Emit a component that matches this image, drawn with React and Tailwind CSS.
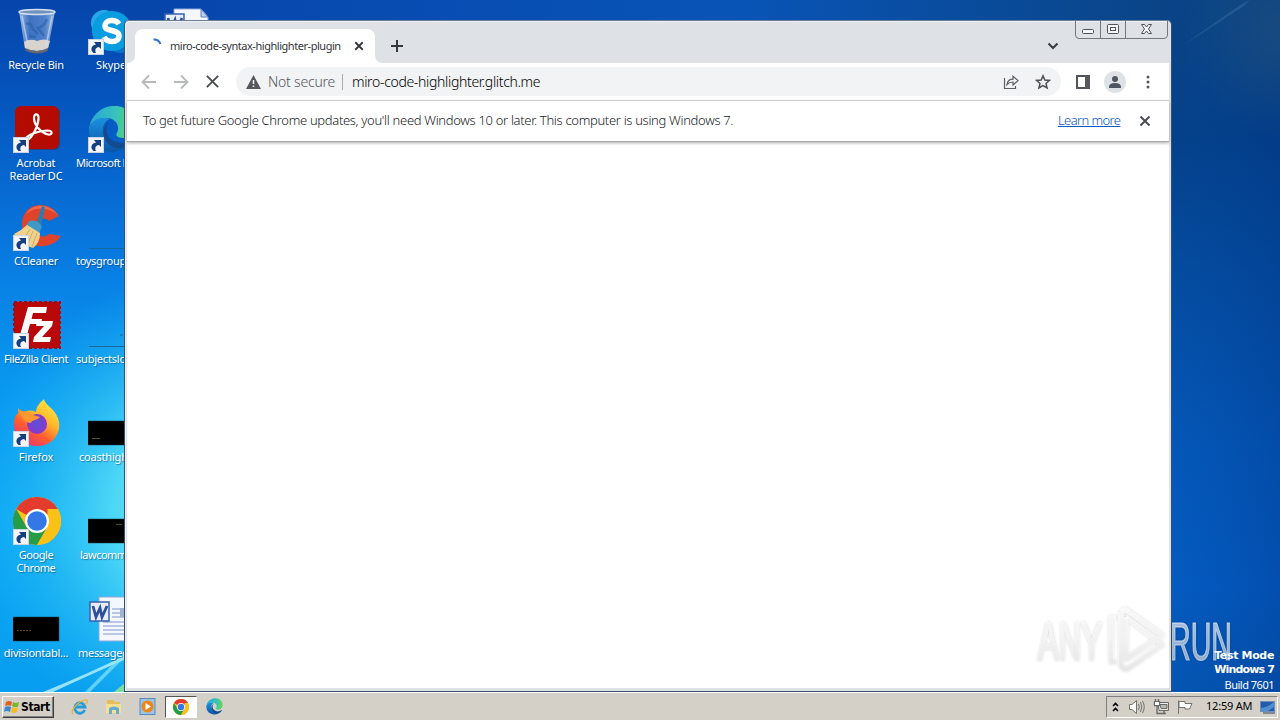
import React from "react";

const UI = "font-['Noto_Sans','Open_Sans',sans-serif]";

function Shortcut() {
  return (
    <svg className="absolute left-0 bottom-0" width="16" height="16" viewBox="0 0 16 16">
      <rect x=".5" y=".5" width="15" height="15" fill="#f2f4f8" stroke="#c9d3e2" />
      <path d="M5.500 14C2 11 3 6.500 8 5.500L6 3H13V10L11 8C7.500 8.500 6.500 11 8 14Z" fill="#153f80" />
    </svg>
  );
}

function RecycleBin() {
  return (
    <svg width="48" height="48" viewBox="0 0 48 48">
      <defs>
        <linearGradient id="bin" x1="0" x2="1">
          <stop offset="0" stopColor="#bfd3ec" stopOpacity=".85" />
          <stop offset=".3" stopColor="#5b88cb" stopOpacity=".65" />
          <stop offset=".7" stopColor="#7da3da" stopOpacity=".6" />
          <stop offset="1" stopColor="#b9cfea" stopOpacity=".85" />
        </linearGradient>
      </defs>
      <path d="M6 4L12 42Q24 49 35 42L42 4Z" fill="url(#bin)" />
      <path d="M11 35Q17 31 24 34Q31 31 37 34L35 41Q24 47 12 41Z" fill="#d9d3cd" />
      <path d="M12 41Q24 47 35 41L34.500 44Q24 49 13 44Z" fill="#65686c" />
      <path d="M13 17Q18 15 20 22L25 27M34 12Q31 20 25 21L31 29M16 29L23 30" stroke="#2f62ad" strokeWidth="2.500" fill="none" opacity=".7" />
      <ellipse cx="24" cy="5" rx="18" ry="2.500" fill="#6f91bd" stroke="#d3dfec" strokeWidth="1.500" />
      <path d="M9 9L15 39M39 9L33 39" stroke="#d3e2f4" strokeWidth="1.500" opacity=".6" />
    </svg>
  );
}

function Skype() {
  return (
    <svg width="48" height="48" viewBox="0 0 48 48">
      <circle cx="16" cy="16" r="13" fill="#28a8ea" />
      <circle cx="32" cy="33" r="13" fill="#0a74c9" />
      <circle cx="24" cy="24" r="20" fill="#0a9ce0" />
      <path d="M31 17C28 12 17 12 17 19C17 25 31 22 31 29C31 36 19 36 16 30" fill="none" stroke="#fff" strokeWidth="5.500" />
    </svg>
  );
}

function WordDoc() {
  return (
    <svg width="48" height="48" viewBox="0 0 48 48">
      <path d="M11 2H38L45 10V46H11Z" fill="#f4f7fe" stroke="#91a7d8" />
      <path d="M38 2V10H45Z" fill="#bccdf2" stroke="#6680bd" />
      <path d="M24 14H42M24 18H42M24 22H42M15 27H42M15 31H42M15 35H42M15 39H42" stroke="#7f95cc" />
      <rect x="32" y="13" width="10" height="9" fill="#a3b1d2" />
      <rect x="2" y="7" width="19" height="19" fill="#e7edfb" stroke="#3b5fae" strokeWidth="1.500" />
      <path d="M5 11L8 22L12 13L14 22L19 11" fill="none" stroke="#2c4f9e" strokeWidth="2.800" />
    </svg>
  );
}

function Acrobat() {
  return (
    <svg width="48" height="48" viewBox="0 0 48 48">
      <rect x="3" y="2" width="44" height="43" rx="6" fill="#49262b" opacity=".5" />
      <rect x="2" y="1" width="44" height="43" rx="6" fill="#b30b00" />
      <path d="M12 34C15 30 23 26 34 25.500C40 25.500 40 30 35 29.500C28 28 21 20 21 13C21 8 26 8 25.500 14C25 22 19 33 14 35.500C11 36.500 10 35.500 12 34Z" fill="none" stroke="#fff" strokeWidth="2.200" />
    </svg>
  );
}

function Edge() {
  return (
    <svg width="100%" height="100%" viewBox="0 0 48 48">
      <defs>
        <linearGradient id="edgeTop" x1="0" x2="1" y1=".2" y2=".3">
          <stop offset="0" stopColor="#2aa5d9" />
          <stop offset=".6" stopColor="#36c3bb" />
          <stop offset="1" stopColor="#65d456" />
        </linearGradient>
        <linearGradient id="edgeLow" x1="0" x2="0" y1="0" y2="1">
          <stop offset="0" stopColor="#1d91dd" />
          <stop offset="1" stopColor="#0b55a8" />
        </linearGradient>
      </defs>
      <path d="M1 22C5 6 18 0 27 1C40 1 47 11 47 20C47 29 40 33 35 33C29 33 27 30 29 28C33 20 26 13 19 13C10 13 3 18 1 22Z" fill="url(#edgeTop)" />
      <path d="M1 22C5 14 14 11 22 14C14 17 13 27 18 35C24 43 35 43 43 37C35 48 22 49 13 44C4 40 0 31 1 22Z" fill="url(#edgeLow)" />
      <path d="M22 17C17 21 17 29 23 34C30 40 39 38 44 34C45 34 45 35 44 37C38 45 24 46 18 36C13 29 15 20 22 17Z" fill="#134b91" />
    </svg>
  );
}

function CCleaner() {
  return (
    <svg width="48" height="48" viewBox="0 0 48 48">
      <path d="M46 13C40 2 26 -1 17 5C6 12 7 32 15 38C25 47 41 44 48 33L36 31C31 36 23 33 22 25C22 16 31 13 36 18Z" fill="#df432c" />
      <path d="M45 12C35 0 20 0 13 11C23 3 35 4 45 12Z" fill="#f3684c" />
      <path d="M29 3L32 4L28 24L23 22Z" fill="#287fae" />
      <path d="M16 18Q25 16 29 24L26 30L13 23Z" fill="#4098c8" />
      <path d="M14 22L27 30Q27 40 20 45Q10 43 1 31Q9 27 14 22Z" fill="#f0d28c" />
      <path d="M17 26L10 37M20 28L15 41M24 30L19 44" stroke="#d0aa68" />
    </svg>
  );
}

function FileZilla() {
  return (
    <svg width="48" height="48" viewBox="0 0 48 48">
      <rect x="1" y="1" width="46" height="46" fill="#b90809" stroke="#a30c12" strokeWidth="2" strokeDasharray="3 2" />
      <path d="M15 6H34L33 12H20L18.500 18H29L28 23H17L14 34H7Z" fill="#fff" />
      <path d="M24 20H40L39 25L29 36H38L37 41H20L21 36L31 25H23Z" fill="#fff" />
    </svg>
  );
}

function Firefox() {
  return (
    <svg width="48" height="48" viewBox="0 0 48 48">
      <defs>
        <linearGradient id="fox" x1=".85" x2=".2" y1="0" y2="1">
          <stop offset="0" stopColor="#fff044" />
          <stop offset=".4" stopColor="#ffb52c" />
          <stop offset=".65" stopColor="#ff602f" />
          <stop offset="1" stopColor="#e62c77" />
        </linearGradient>
        <radialGradient id="globe">
          <stop offset="0" stopColor="#5754d8" />
          <stop offset="1" stopColor="#8c35cb" />
        </radialGradient>
      </defs>
      <path d="M5 9C7 12 10 13 14 12C18 11 21 12 23 13C23 7 28 3 31 0C32 7 44 10 46 23C48 35 39 47 25 47C11 47 2 39 1 28C0 22 2 17 5 14Z" fill="url(#fox)" />
      <circle cx="24" cy="25" r="10" fill="url(#globe)" />
      <path d="M5 10C9 14 16 12 20 16L27 18C24 22 19 20 18 24C13 24 9 20 5 10Z" fill="#ff982e" />
    </svg>
  );
}

function Chrome() {
  return (
    <svg width="100%" height="100%" viewBox="0 0 48 48">
      <circle cx="24" cy="24" r="24" fill="#fbc116" />
      <path d="M24 24L3.200 12A24 24 0 0 1 44.800 12Z" fill="#e33b2e" />
      <path d="M3.200 12L13.600 30L34.400 30L24 48A24 24 0 0 1 3.200 12Z" fill="#269b48" />
      <path d="M44.800 12A24 24 0 0 1 24 48L34.500 30V12Z" fill="#fbc116" />
      <circle cx="24" cy="24" r="12" fill="#fff" />
      <circle cx="24" cy="24" r="9.800" fill="#3478e8" />
    </svg>
  );
}

function Thumb({ kind }) {
  if (kind === "line" || kind === "dot")
    return (
      <svg width="48" height="48">
        <path d="M1 45.500H47" stroke="#146a9c" />
        {kind === "dot" && <path d="M32 34H35" stroke="#146a9c" />}
      </svg>
    );
  return (
    <svg width="48" height="48">
      <rect y="22" width="46" height="24" fill="#000" stroke="#233e45" strokeWidth=".5" />
      {kind === "left" && <path d="M4 39.500H12" stroke="#756523" strokeOpacity=".8" />}
      {kind === "right" && <path d="M28 27.500H34" stroke="#62622b" strokeOpacity=".8" />}
      {kind === "mid" && <path d="M4 35.500H19" stroke="#67461c" strokeDasharray="2 1" />}
    </svg>
  );
}

const columns = [
  [
    ["Recycle Bin", <RecycleBin />, false, "tracking-[-0.2px]"],
    ["Acrobat\nReader DC", <Acrobat />, true, "tracking-[-0.2px]"],
    ["CCleaner", <CCleaner />, true, "tracking-[-0.3px]"],
    ["FileZilla Client", <FileZilla />, true, "tracking-[-0.45px]"],
    ["Firefox", <Firefox />, true, "tracking-[-0.1px]"],
    ["Google\nChrome", <Chrome />, true, "tracking-[-0.4px]"],
    ["divisiontabl...", <Thumb kind="mid" />, false, "tracking-[-0.25px]"],
  ],
  [
    ["Skype", <Skype />, true, "self-start pl-[21px] tracking-[-0.1px]"],
    ["Microsoft Edge", <Edge />, true, "self-start pl-px tracking-[-0.5px]"],
    ["toysgroup.j...", <Thumb kind="line" />, false, "self-start pl-px tracking-[-0.3px]"],
    ["subjectslo...", <Thumb kind="dot" />, false, "self-start pl-px tracking-[-0.2px]"],
    ["coasthigh...", <Thumb kind="left" />, false, "self-start pl-1 tracking-[-0.2px]"],
    ["lawcomm...", <Thumb kind="right" />, false, "self-start pl-[5px] tracking-[-0.5px]"],
    ["messagec...", <WordDoc />, false, "self-start pl-[3px] tracking-[-0.3px]"],
  ],
  [["", <WordDoc />, false, ""]],
];

function Wallpaper() {
  return (
    <svg className="absolute inset-0" width="1280" height="692" viewBox="0 0 1280 692" preserveAspectRatio="none">
      <defs>
        <linearGradient id="leftSky" x1="0" x2="0" y1="0" y2="1">
          <stop offset="0" stopColor="#0645aa" />
          <stop offset=".14" stopColor="#0554bd" />
          <stop offset=".27" stopColor="#0769d2" />
          <stop offset=".42" stopColor="#0883e6" />
          <stop offset=".56" stopColor="#0998f0" />
          <stop offset=".75" stopColor="#0ca8f5" />
          <stop offset="1" stopColor="#079df0" />
        </linearGradient>
        <radialGradient id="glow" gradientUnits="userSpaceOnUse" cx="210" cy="510" r="240">
          <stop offset="0" stopColor="#76eef2" />
          <stop offset=".4" stopColor="#50daf6" stopOpacity=".95" />
          <stop offset="1" stopColor="#1db7f3" stopOpacity="0" />
        </radialGradient>
        <linearGradient id="rightSky" x1="0" x2="0" y1="0" y2="1">
          <stop offset="0" stopColor="#0a4486" />
          <stop offset=".2" stopColor="#04418b" />
          <stop offset=".4" stopColor="#044ca0" />
          <stop offset=".65" stopColor="#0457b8" />
          <stop offset=".85" stopColor="#045bc1" />
          <stop offset="1" stopColor="#0455b2" />
        </linearGradient>
        <linearGradient id="edgeShade" x1="0" x2="1">
          <stop offset="0" stopColor="#003c90" stopOpacity="0" />
          <stop offset="1" stopColor="#002f80" stopOpacity=".28" />
        </linearGradient>
        <radialGradient id="haze" gradientUnits="userSpaceOnUse" cx="1290" cy="30" r="110">
          <stop offset="0" stopColor="#2a5878" stopOpacity=".5" />
          <stop offset="1" stopColor="#2a5878" stopOpacity="0" />
        </radialGradient>
        <linearGradient id="topSky" x1="0" x2="1">
          <stop offset="0" stopColor="#0645aa" />
          <stop offset=".3" stopColor="#084db3" />
          <stop offset=".6" stopColor="#0854b5" />
          <stop offset="1" stopColor="#0a4486" />
        </linearGradient>
      </defs>
      <rect width="640" height="692" fill="url(#leftSky)" />
      <rect x="640" width="640" height="692" fill="url(#rightSky)" />
      <rect width="400" height="692" fill="url(#glow)" />
      <rect x="1170" width="110" height="692" fill="url(#edgeShade)" />
      <rect x="124" width="1047" height="26" fill="url(#topSky)" />
      <rect x="1170" width="110" height="150" fill="url(#haze)" />
      <path d="M1182 46L1240 5L1250 0L1244 6Z" fill="#5b92bf" opacity=".25" />
      <path d="M43 692Q90 673 126 655V659Q87 676 53 692Z" fill="#c5f8ff" opacity=".75" />
      <path d="M85 692L121 656L123 659L90 692Z" fill="#8ee8fa" opacity=".65" />
      <path d="M114 692L126 682V692Z" fill="#78dfa0" />
    </svg>
  );
}

function Desktop() {
  return (
    <div className="flex h-[692px] overflow-hidden">
      {columns.map((col, i) => (
        <div key={i} className="relative flex w-[75px] shrink-0 flex-col">
          {col.map(([label, icon, link, cls], j) => (
            <div key={j} className="flex h-[98px] shrink-0 flex-col items-center pt-[7px]">
              <div className="relative -ml-px h-12 w-12">
                {icon}
                {link && <Shortcut />}
              </div>
              <div className={(i === 0 ? "-ml-[3px] " : "") + "mt-[3px] whitespace-pre text-center text-[11px] leading-[13px] text-white [text-shadow:1px_1px_1px_#00306088] " + cls}>{label}</div>
            </div>
          ))}
        </div>
      ))}
    </div>
  );
}

function X({ s = 12, w = 2, c = "#4a4d51" }) {
  return (
    <svg width={s} height={s} viewBox="0 0 12 12">
      <path d="M1.500 1.500L10.500 10.500M10.500 1.500L1.500 10.500" stroke={c} strokeWidth={w} />
    </svg>
  );
}

function Arrow({ flip }) {
  return (
    <svg width="16" height="16" viewBox="0 0 16 16" className={flip ? "-scale-x-100" : ""}>
      <path d="M15 8H2M8 1.500L1.500 8L8 14.500" fill="none" stroke="#b7b9bb" strokeWidth="1.800" />
    </svg>
  );
}

function Caption() {
  return (
    <svg className="absolute right-0 top-0" width="94" height="18" viewBox="0 0 94 18">
      <path d="M.5 0V14Q.5 17.500 4 17.500H89Q92.500 17.500 92.500 14V0M25.500 0V17M50.500 0V17" fill="none" stroke="#74777d" />
      <g fill="#f4f5f7" stroke="#4e5259">
        <rect x="7.500" y="8.500" width="11" height="4" rx="1" />
        <rect x="32.500" y="3.500" width="11" height="9" rx="1" />
        <rect x="35.500" y="6.500" width="5" height="3" />
        <path d="M66.500 3.500H69.500L71.500 6L73.500 3.500H76.500L73.500 8L76.500 12.500H73.500L71.500 10L69.500 12.500H66.500L69.500 8Z" />
      </g>
    </svg>
  );
}

function Browser() {
  return (
    <div className="absolute left-[124px] top-5 flex h-[672px] w-[1048px] flex-col rounded-t-[5px] border border-[#38506c] bg-[#dee1e6] pl-[2px] pr-[2px] pb-[3px] [border-top-color:#6c7f99] shadow-[inset_1px_1px_0_#eef0f3]">
      <div className="relative flex h-[42px] shrink-0 items-end">
        <div className="relative ml-2 flex h-[34px] w-[240px] items-center rounded-t-lg bg-white pl-[11px]">
          <svg className="absolute -left-2 bottom-0" width="8" height="8"><path d="M8 0V8H0Q8 8 8 0" fill="#fff" /></svg>
          <svg className="absolute -right-2 bottom-0" width="8" height="8"><path d="M0 0V8H8Q0 8 0 0" fill="#fff" /></svg>
          <svg width="16" height="16" viewBox="0 0 16 16"><path d="M7.500 1.500A7 7 0 0 1 14.500 6" fill="none" stroke="#2875d2" strokeWidth="2" /></svg>
          <span className="ml-2 w-[171px] whitespace-nowrap text-[11px] tracking-[-0.46px] text-[#33363a]">miro-code-syntax-highlighter-plugin</span>
          <span className="ml-[13px]"><X s={10} w={2.2} c="#34373b" /></span>
        </div>
        <svg className="mb-[11px] ml-4" width="12" height="12"><path d="M6 0V12M0 6H12" stroke="#34373c" strokeWidth="2" /></svg>
        <svg className="mb-[13px] ml-auto mr-[110px]" width="12" height="8"><path d="M1.500 1.500L6 6L10.500 1.500" fill="none" stroke="#383c43" strokeWidth="2" /></svg>
        <Caption />
      </div>
      <div className="flex h-[38px] shrink-0 items-center border-b border-[#d8d9db] bg-white pl-[14px]">
        <Arrow />
        <span className="ml-4"><Arrow flip /></span>
        <span className="ml-4 flex"><X s={15} w={1.5} /></span>
        <div className="ml-4 flex h-[29px] w-[825px] items-center rounded-full bg-[#f1f3f4] pl-[10px] text-[14px] font-light">
          <svg width="15" height="14" viewBox="0 0 15 14"><path d="M7.500 0L15 14H0Z" fill="#54575c" /><path d="M7.500 5V9M7.500 10.500V12" stroke="#f1f3f4" strokeWidth="1.500" /></svg>
          <span className="ml-[7px] w-[67px] whitespace-nowrap tracking-[-0.2px] text-[#55585d]">Not secure</span>
          <span className="ml-[7px] h-4 w-px bg-[#aaacae]" />
          <span className="ml-[9px] whitespace-nowrap tracking-[-0.33px] text-black">miro-code-highlighter.glitch.me</span>
          <svg className="ml-auto" width="16" height="16" viewBox="0 0 16 16"><path d="M1.500 4V14.500H12.500V12M4 10.500C4.500 7 7 5.200 10 5.200V2.300L15 6.600L10 11V8C7.500 8 5.500 8.800 4 10.500Z" fill="none" stroke="#5b5e63" strokeWidth="1.200" /></svg>
          <svg className="ml-4 mr-[10px]" width="16" height="16" viewBox="0 0 16 16"><path d="M8 1.800L9.800 6L14.500 6.400L11 9.400L12.100 14L8 11.600L3.900 14L5 9.400L1.500 6.400L6.200 6Z" fill="none" stroke="#4d5055" strokeWidth="1.500" /></svg>
        </div>
        <svg className="ml-[15px]" width="14" height="14"><path d="M1 1H13V13H1Z" fill="#fff" stroke="#505358" strokeWidth="2" /><path d="M9 1H14V13H9Z" fill="#55585c" /></svg>
        <svg className="ml-[14px]" width="22" height="22"><circle cx="11" cy="11" r="11" fill="#dee1e6" /><circle cx="11" cy="8" r="3" fill="#505660" /><path d="M5 16Q5 12 11 12Q17 12 17 16V17H5Z" fill="#505660" /></svg>
        <svg className="ml-[20px]" width="4" height="14"><g fill="#55585c"><circle cx="2" cy="2" r="1.500" /><circle cx="2" cy="7" r="1.500" /><circle cx="2" cy="12" r="1.500" /></g></svg>
      </div>
      <div className="relative flex h-[41px] shrink-0 items-center border-b border-[#aaa] bg-white pl-4 text-[13px] font-light text-[#202326] shadow-[0_1px_3px_#0005]">
        <span className="whitespace-nowrap tracking-[-0.32px]">To get future Google Chrome updates, you'll need Windows 10 or later. This computer is using Windows 7.</span>
        <span className="ml-auto w-[63px] whitespace-nowrap tracking-[-0.6px] text-[#0b57c0] underline underline-offset-1">Learn more</span>
        <span className="ml-[18px] mr-[18px] flex"><X s={12} w={2} /></span>
      </div>
      <div className="flex-1 bg-white" />
    </div>
  );
}

function Watermark() {
  return (
    <svg className="absolute left-[1034px] top-[604px]" width="202" height="72" viewBox="0 0 202 72">
      <defs>
        <filter id="soft" x="-10%" y="-20%" width="120%" height="140%"><feDropShadow dx="0" dy="0" stdDeviation="1.500" floodColor="#000" floodOpacity=".3" /></filter>
        <linearGradient id="mark" gradientUnits="userSpaceOnUse" x1="0" x2="0" y1="4" y2="68">
          <stop offset="0" stopColor="#fff" stopOpacity=".65" />
          <stop offset=".5" stopColor="#f5f5f5" stopOpacity=".58" />
          <stop offset="1" stopColor="#e2e2e2" stopOpacity=".58" />
        </linearGradient>
      </defs>
      <g filter="url(#soft)" fill="url(#mark)" stroke="url(#mark)" strokeWidth="1.200" fontFamily="Liberation Sans Narrow, Liberation Sans, sans-serif" fontSize="53">
        <text x="4" y="55.500" textLength="64" lengthAdjust="spacingAndGlyphs">ANY</text>
        <text x="136" y="55.500" textLength="62" lengthAdjust="spacingAndGlyphs">RUN</text>
        <g fill="none" strokeWidth="4.500" strokeLinejoin="round">
          <path d="M82 14H77V58H82" />
          <path d="M87 8V62Q91 67 95 64L128 41L92 13" />
          <path d="M87 8Q91 4 95 8L128 31L125 35" />
          <path d="M92 13V55L121 36" />
        </g>
      </g>
    </svg>
  );
}

function Start() {
  return (
    <div className="flex h-[22px] w-[52px] items-center border border-b-[#404040] border-l-white border-r-[#404040] border-t-white pl-px shadow-[inset_-1px_-1px_0_#808080]">
      <svg width="16" height="16" viewBox="0 0 16 16">
        <path d="M2 3Q5 1 8 3L7 7Q4 5.500 1 7Z" fill="#e95b24" /><path d="M9 3Q12 5 15 3L14 7.500Q11 9 8 7Z" fill="#79b52e" /><path d="M1 8Q4 6.500 7 8L6 13Q3 11 0 13Z" fill="#3e87d0" /><path d="M8 8Q11 10 14 8.500L13 13Q10 15 7 13Z" fill="#f5bd22" />
      </svg>
      <span className="ml-px font-['DejaVu_Sans_Condensed','DejaVu_Sans',sans-serif] text-[12px] font-bold tracking-[-0.4px] [font-stretch:condensed]">Start</span>
    </div>
  );
}

function Taskbar() {
  return (
    <div className="relative flex h-7 items-center border-t border-white bg-[#d4d0c8] pl-[2px] text-black">
      <Start />
      <svg className="ml-[17px]" width="18" height="18" viewBox="0 0 18 18">
        <path d="M13.700 12A5.200 5.200 0 1 1 14 9H5" fill="none" stroke="#279bdc" strokeWidth="2.800" />
        <path d="M2 16C-2 12 10 1 16 2C18 3 15 6 14 7" fill="none" stroke="#e7b43b" strokeWidth="1.300" />
      </svg>
      <svg className="ml-4" width="18" height="18" viewBox="0 0 18 18">
        <path d="M2 2H8L10 4H15V15H2Z" fill="#e6bd58" /><path d="M1 6H16V15H1Z" fill="#f6df91" /><path d="M4 16V10Q9 7 14 10V16H11V12H7V16Z" fill="#66abd4" />
      </svg>
      <svg className="ml-4" width="17" height="17" viewBox="0 0 17 17">
        <rect x="1" y=".5" width="15" height="16" fill="#9cc3e7" stroke="#5a8ab9" /><circle cx="8.500" cy="8.500" r="6" fill="#ef8517" /><path d="M6.500 5L12 8.500L6.500 12Z" fill="#fff" />
      </svg>
      <div className="ml-[9px] flex h-[22px] w-8 items-center justify-center border border-b-white border-l-[#555] border-r-white border-t-[#555] bg-white">
        <span className="h-4 w-4"><Chrome /></span>
      </div>
      <span className="ml-[9px] h-[17px] w-[17px]"><Edge /></span>
      <div className="ml-auto mr-[2px] flex h-[22px] w-[172px] items-center border border-b-white border-l-[#808080] border-r-white border-t-[#808080] pl-[5px]">
        <svg width="7" height="10"><path d="M1 4L3.500 1.500L6 4M1 9L3.500 6.500L6 9" fill="none" stroke="#000" strokeWidth="1.600" /></svg>
        <svg className="ml-[10px]" width="16" height="16" viewBox="0 0 16 16" fill="none" stroke="#73736f"><path d="M.5 5.500H3L7.500 1.500V14.500L3 10.500H.5Z" fill="#fff" /><path d="M9.500 5Q11 8 9.500 11M11.500 3Q14 8 11.500 13M13.500 2Q17 8 13.500 14" /></svg>
        <svg className="ml-2" width="17" height="16" viewBox="0 0 17 16" fill="none" stroke="#686865"><path d="M5 3.500H15.500V11.500H6Z" fill="#eee" /><path d="M7 5.500H14V9.500H8Z" fill="#b9b8b2" /><path d="M1.500 2V6.500H6.500V2M2.500 0V2M5.500 0V2M4 7V14.500H13M11 12V14" fill="none" strokeWidth="1.300" /><rect x="1.500" y="2.500" width="5" height="4" fill="#fff" /></svg>
        <svg className="ml-[7px]" width="17" height="16" viewBox="0 0 17 16"><path d="M1.500 1.500V15M2 2.500H8V4.500H15L12.500 10H8V8.500H2Z" fill="#fff" stroke="#73736f" /></svg>
        <span className="ml-3 w-[47px] whitespace-nowrap text-[11px] tracking-[-0.2px]">12:59 AM</span>
        <svg className="ml-[7px]" width="16" height="14"><rect x=".5" y="1.500" width="14" height="10" fill="#245ca9" stroke="#6a91bd" /><path d="M1 8Q7 8 14 2V7L8 11H1Z" fill="#65a4e1" opacity=".7" /><path d="M3 13H15" stroke="#27435f" /></svg>
      </div>
    </div>
  );
}

export default function App() {
  return (
    <div className={"relative h-[720px] w-[1280px] overflow-hidden bg-[#0454b3] " + UI}>
      <Wallpaper />
      <Desktop />
      <Browser />
      <Watermark />
      <div className="absolute right-[6px] top-[649px] text-right font-['DejaVu_Sans',sans-serif] text-[11px] leading-[14px] text-white">
        <div className="font-bold tracking-[-0.35px]">Test Mode</div>
        <div className="font-bold tracking-[-0.85px]">Windows 7</div>
        <div className="mt-px font-['Noto_Sans',sans-serif] tracking-[-0.5px]">Build 7601</div>
      </div>
      <Taskbar />
    </div>
  );
}
